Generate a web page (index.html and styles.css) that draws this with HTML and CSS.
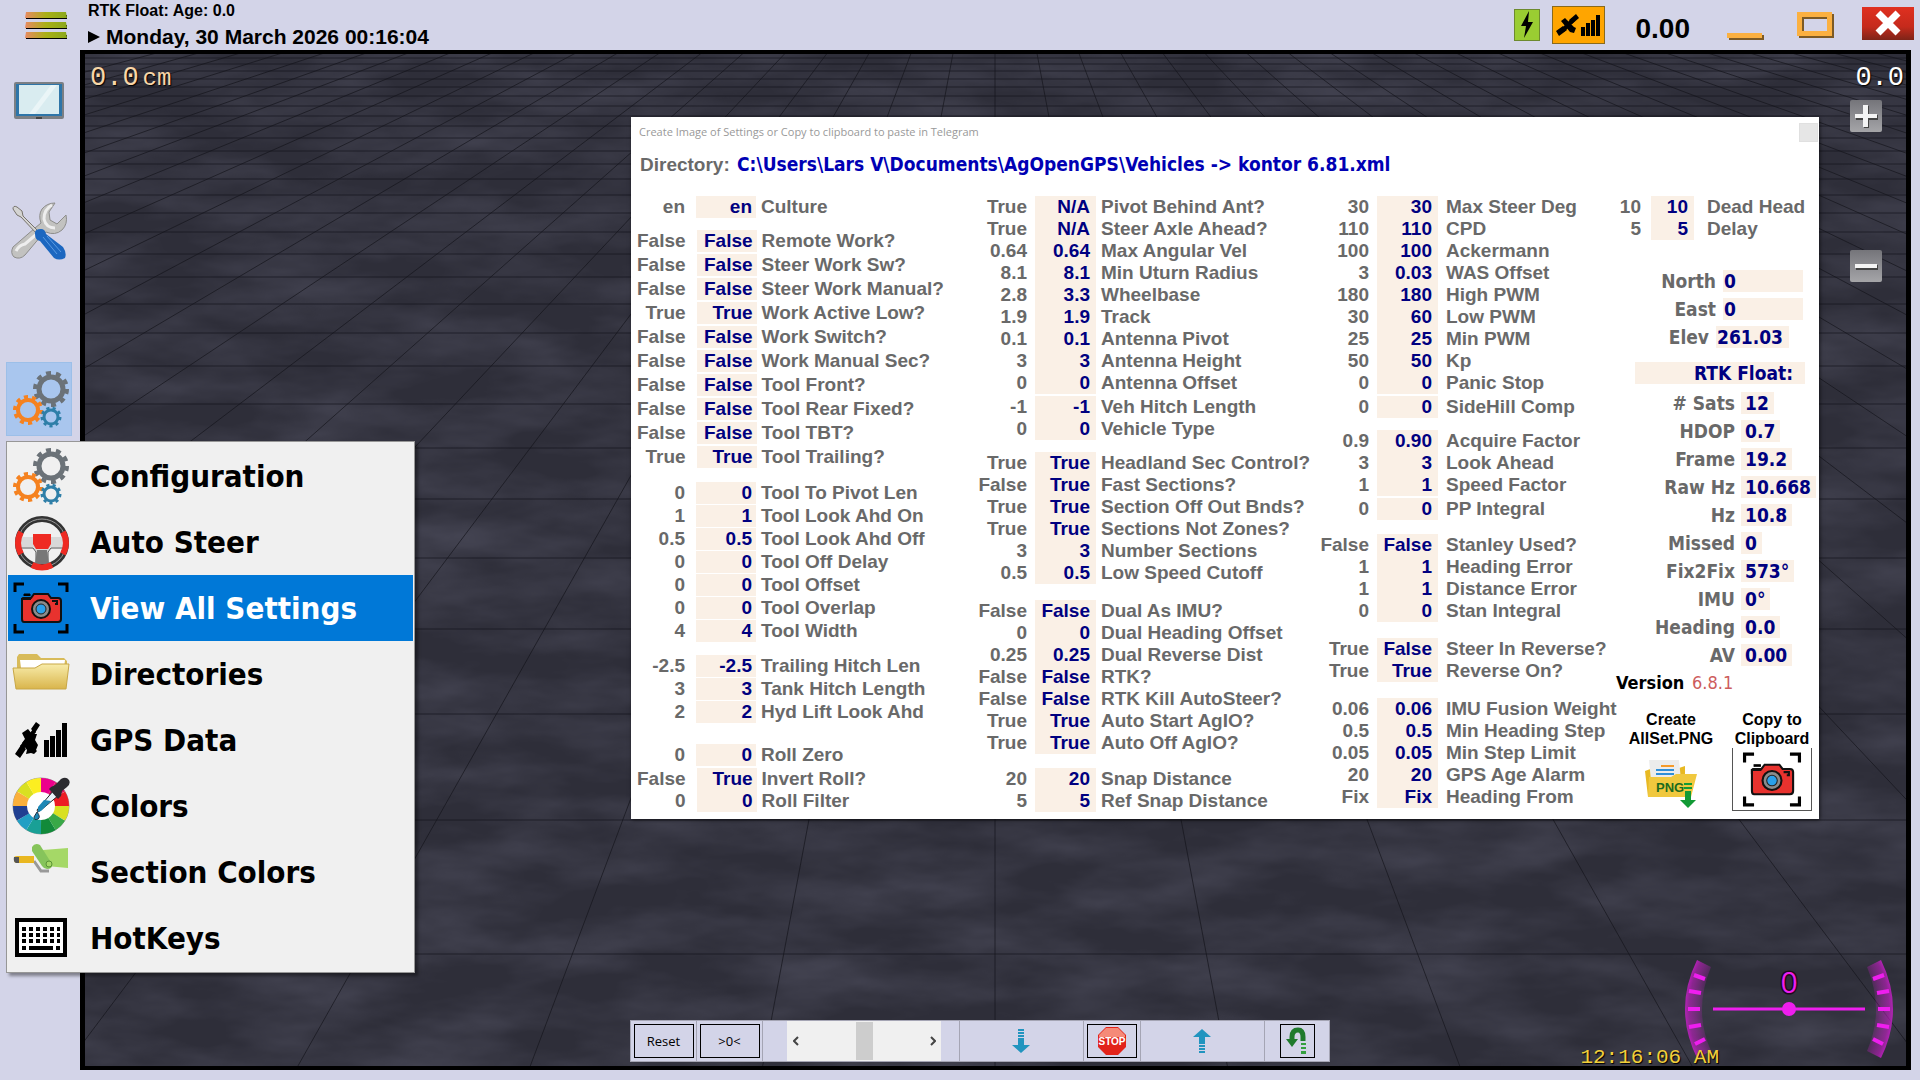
FILE: index.html
```html
<!DOCTYPE html>
<html lang="en">
<head>
    <meta charset="UTF-8">
    <meta name="viewport" content="width=device-width, initial-scale=1.0">
    <title>AgOpenGPS</title>
    <link rel="stylesheet" href="styles.css">
</head>
<body>
    <!-- Shared icons -->
    <svg class="sprite" aria-hidden="true">
        <symbol id="gears" viewBox="0 0 58 58">
            <g fill="none">
                <g stroke="#6b7278">
                    <circle cx="39" cy="19" r="12" stroke-width="5"/>
                    <circle cx="39" cy="19" r="16" stroke-width="4" pathLength="20" stroke-dasharray="1 1"/>
                </g>
                <g stroke="#f58220">
                    <circle cx="16" cy="40" r="10" stroke-width="4"/>
                    <circle cx="16" cy="40" r="13" stroke-width="4" pathLength="20" stroke-dasharray="1 1"/>
                </g>
                <g stroke="#2f7fa8">
                    <circle cx="39" cy="47" r="7" stroke-width="3"/>
                    <circle cx="39" cy="47" r="9" stroke-width="3" pathLength="18" stroke-dasharray="1 1"/>
                </g>
            </g>
        </symbol>
        <symbol id="camera" viewBox="0 0 58 54">
            <path d="M3 11V3h9M46 3h9v8M3 43v8h9M46 51h9v-8" fill="none" stroke="#000" stroke-width="3"/>
            <path d="M12 15v-2h6v2" fill="#000" stroke="#000" stroke-width="1"/>
            <path d="M11 17h8l3-4h14l3 4h7q3 0 3 3v18q0 3-3 3H12q-2 0-2-3V18z" fill="#e8322e" stroke="#111" stroke-width="2"/>
            <path d="M10 22v-4h9M40 20h5v3h-2" fill="none" stroke="#111" stroke-width="2"/>
            <circle cx="29" cy="28" r="9" fill="#8b8b8b" stroke="#111" stroke-width="2"/>
            <circle cx="29" cy="28" r="5" fill="#2aa0ea" stroke="#222" stroke-width="1"/>
        </symbol>
        <symbol id="gps" viewBox="0 0 54 38">
            <path d="M17 8l5-7 4 3-5 8zM1 33l6-9 5 4-6 9z"/>
            <path d="M8 12l6-4 4 5 5 0-2 6 3 5-2 5 1 1-3 3-3-1-5 1 1-4-3-4-2-3 3-4z"/>
            <path d="M6 25l13-17 3 3-12 17z"/>
            <path d="M30 19h5v17h-5zM36 15h5v21h-5zM42 9h5v27h-5zM48 2h5v34h-5z"/>
        </symbol>
    </svg>

    <header class="topbar">
        <button class="icon-button hamburger" aria-label="Menu">
            <svg width="44" height="28" viewBox="0 0 44 28">
                <defs>
                    <linearGradient id="bar">
                        <stop offset="0" stop-color="#e88a62"/>
                        <stop offset=".5" stop-color="#a9b016"/>
                        <stop offset="1" stop-color="#8aa81c"/>
                    </linearGradient>
                </defs>
                <path d="M2 3h41v4H2zM2 13h41v4H2zM2 23h41v4H2z" fill="#000"/>
                <path d="M2 0h40l1 6H1zM2 10h40l1 6H1zM2 20h40l1 6H1z" fill="url(#bar)"/>
            </svg>
        </button>
        <div class="status">
            <div class="fix">RTK Float: Age: 0.0</div>
            <div class="clock"><svg width="12" height="12" viewBox="0 0 12 12"><path d="M0 0l12 6-12 6z"/></svg>Monday, 30 March 2026 00:16:04</div>
        </div>
        <div class="indicators">
            <span class="power"><svg width="14" height="28" viewBox="0 0 14 28"><path d="M9 0L1 15h5L4 27l9-16H8z"/></svg></span>
            <button class="signal" aria-label="GPS signal"><svg width="45" height="22" viewBox="0 0 45 22"><path d="M13 6l7-6 3 4-7 6zM0 17l7-5 4 4-8 6z"/><path d="M5 7l4-3 9 9 2 1-2 5-4-1z"/><path d="M5 15l11-11 3 3-11 11z"/><path d="M25 13h4v9h-4zM30 9h4v13h-4zM35 6h4v16h-4zM40 1h4v21h-4z"/></svg></button>
            <span class="speed">0.00</span>
            <button class="icon-button minimize" aria-label="Minimize"><svg width="38" height="8" viewBox="0 0 38 8"><path d="M3 2h35v5H3z" fill="#7d5a24"/><path d="M1 0h35v5H1z" fill="#fbb040"/></svg></button>
            <button class="icon-button maximize" aria-label="Maximize"><svg width="38" height="28" viewBox="0 0 38 28"><path d="M3 3h35v24H3zm5 5v14h25V8z" fill="#7d5a24" fill-rule="evenodd"/><path d="M1 1h35v24H1zm5 5v14h25V6z" fill="#fbb040" fill-rule="evenodd"/></svg></button>
            <button class="close" aria-label="Close"><svg width="28" height="28" viewBox="0 0 28 28"><path d="M4 4l20 20M24 4L4 24" stroke="#fff" stroke-width="7"/></svg></button>
        </div>
    </header>

    <main class="workspace">
        <aside class="sidebar">
            <button class="icon-button side-button" aria-label="Display">
                <svg width="52" height="40" viewBox="0 0 52 40">
                    <rect x="1" y="1" width="50" height="37" rx="2" fill="#7b7f84"/>
                    <rect x="3" y="3" width="46" height="32" fill="#2e75a8"/>
                    <rect x="6" y="4" width="40" height="29" fill="#d9ecf0"/>
                    <path d="M16 33L38 4h6L22 33z" fill="#eaf5f7"/>
                    <path d="M23 36h6v2h-6z" fill="#444"/>
                </svg>
            </button>
            <button class="icon-button side-button" aria-label="Tools">
                <svg width="56" height="58" viewBox="0 0 56 58">
                    <path d="M2 45l22-19 6-5q-3-8 1-14 5-6 13-6l-6 9 1 8 7 4 9-9q2 9-4 15-7 6-16 2l-5 4L14 53q-5 5-11 2-4-4-1-10z" fill="#c2c2c0" stroke="#8d8d8b" stroke-width="1"/>
                    <path d="M5 49q3-6 9-7l14-12M41 3q-8 4-8 14 2 9 11 9" fill="none" stroke="#eee" stroke-width="3"/>
                    <path d="M2 7q0-4 4-2l5 4 1 5 16 16-2 2L10 15l-4-2z" fill="#d4d4d2" stroke="#77736c" stroke-width="1"/>
                    <path d="M24 32q-1-5 6-5 4 0 5 5l17 13q4 6 2 11-6 3-11 0L29 39q-5-1-5-7z" fill="#1c67c0"/>
                    <path d="M32 35l14 17M36 34l14 16" stroke="#5a9be2" stroke-width="1"/>
                </svg>
            </button>
            <button class="icon-button side-button active" aria-label="Settings"><svg width="58" height="58"><use href="#gears"/></svg></button>

            <ul class="menu">
                <li><button class="menu-item"><svg width="58" height="58"><use href="#gears"/></svg>Configuration</button></li>
                <li><button class="menu-item">
                    <svg width="58" height="58" viewBox="0 0 58 58">
                        <circle cx="30" cy="30" r="24" fill="none" stroke="#333" stroke-width="6"/>
                        <circle cx="30" cy="30" r="24" fill="none" stroke="#999" stroke-width="1"/>
                        <path d="M8 24h44v10H39l-3 4H24l-3-4H8z" fill="#d8d8d8"/>
                        <path d="M10 35h11l3 4v12M50 35H39l-3 4v12" fill="none" stroke="#555" stroke-width="1"/>
                        <path d="M25 37h10l2 14H23z" fill="#777"/>
                        <path d="M21 21h18v10l-3 5H24l-3-5z" fill="#ef2b23"/>
                        <path d="M9 19q-6 11 0 22M51 19q6 11 0 22M20 52q10 5 20 0" fill="none" stroke="#ef2b23" stroke-width="6"/>
                    </svg>Auto Steer</button></li>
                <li><button class="menu-item selected"><svg width="58" height="54"><use href="#camera"/></svg>View All Settings</button></li>
                <li><button class="menu-item">
                    <svg width="58" height="58" viewBox="0 0 58 58">
                        <defs>
                            <linearGradient id="folder" x2="0" y2="1">
                                <stop offset="0" stop-color="#f8ecaa"/>
                                <stop offset="1" stop-color="#d9b54c"/>
                            </linearGradient>
                        </defs>
                        <path d="M5 12l2-3h18l4 4h23l3 3v14H5z" fill="#d8bb5a"/>
                        <path d="M8 15h45l-1 8H9z" fill="#fff"/>
                        <path d="M1 23h22l7-4h27l-3 25H4z" fill="url(#folder)" stroke="#c8a747" stroke-width="1"/>
                    </svg>Directories</button></li>
                <li><button class="menu-item"><svg width="58" height="38"><use href="#gps"/></svg>GPS Data</button></li>
                <li><button class="menu-item">
                    <svg width="58" height="58" viewBox="0 0 58 58">
                        <circle cx="29" cy="29" r="28" fill="#fff" stroke="#999" stroke-width="1"/>
                        <g fill="none" stroke-width="14">
                            <path d="M29 8a21 21 0 0 1 11 3" stroke="#ec008c"/>
                            <path d="M40 11a21 21 0 0 1 7 7" stroke="#d4145a"/>
                            <path d="M47 18a21 21 0 0 1 3 11" stroke="#ed1c24"/>
                            <path d="M50 29a21 21 0 0 1-3 11" stroke="#d9e021"/>
                            <path d="M47 40a21 21 0 0 1-7 7" stroke="#39a847"/>
                            <path d="M40 47a21 21 0 0 1-11 3" stroke="#128a3a"/>
                            <path d="M29 50a21 21 0 0 1-11-3" stroke="#19a096"/>
                            <path d="M18 47a21 21 0 0 1-7-7" stroke="#219fc4"/>
                            <path d="M11 40a21 21 0 0 1-3-11" stroke="#203f91"/>
                            <path d="M8 29a21 21 0 0 1 3-11" stroke="#fbb03b"/>
                            <path d="M11 18a21 21 0 0 1 7-7" stroke="#d9e021"/>
                            <path d="M18 11a21 21 0 0 1 11-3" stroke="#fcee21"/>
                        </g>
                        <path d="M25 33l17-20 5 5-18 15-3 2z" fill="#e9f6fb" stroke="#222" stroke-width="1"/>
                        <path d="M26 30l6-7 7 1-10 10-3 1z" fill="#1d87b5"/>
                        <path d="M39 10l4-2 6-6q5-3 8 1 2 4-2 7l-5 4-1 5-3 3-9-10z" fill="#2b2b2f"/>
                        <path d="M25 35q4 5 1 7-4 2-4-2z" fill="#1d87b5" stroke="#234" stroke-width="1"/>
                    </svg>Colors</button></li>
                <li><button class="menu-item">
                    <svg width="58" height="58" viewBox="0 0 58 58">
                        <path d="M31 7l25-2v20l-22-2z" fill="#a5d867"/>
                        <path d="M22 18l7 10 8 0" fill="none" stroke="#999" stroke-width="3"/>
                        <path d="M20 4q3-5 8-2l12 19q1 5-5 5-3 0-5-3L20 8z" fill="#86c45b"/>
                        <circle cx="37" cy="21" r="3" fill="#a5d867" stroke="#5a9336" stroke-width="1"/>
                        <path d="M2 15q0-2 3-2l17 0v7L5 20q-3 0-3-3z" fill="#e9b720"/>
                        <path d="M2 14h5v6H4q-3-1-2-6z" fill="#555"/>
                    </svg>Section Colors</button></li>
                <li><button class="menu-item">
                    <svg width="58" height="42" viewBox="0 0 58 42">
                        <rect x="5" y="3" width="48" height="35" fill="#fff" stroke="#000" stroke-width="4"/>
                        <path d="M10 12h38M10 18h38M10 24h38" stroke="#000" stroke-width="4" stroke-dasharray="4 3"/>
                        <path d="M10 31h4M17 31h24M44 31h4" stroke="#000" stroke-width="4"/>
                    </svg>HotKeys</button></li>
            </ul>
        </aside>

        <section class="field">
            <svg class="floor" viewBox="85 54 1821 1012" preserveAspectRatio="none" aria-hidden="true">
                <defs>
                    <filter id="soil" x="0" y="0" width="100%" height="100%" color-interpolation-filters="sRGB">
                        <feTurbulence type="fractalNoise" baseFrequency=".008 .025" numOctaves="4" seed="7"/>
                        <feColorMatrix values="0 0 0 0 .3  0 0 0 0 .3  0 0 0 0 .36  1.2 0 0 0 -.4"/>
                    </filter>
                </defs>
                <rect x="85" y="54" width="1821" height="1012" fill="#2e2e39"/>
                <rect x="85" y="54" width="1821" height="1012" filter="url(#soil)"/>
                <path class="grid-line" d="M85 954H1906M85 820H1906M85 714H1906M85 629H1906M85 558H1906M85 499H1906M85 448H1906M85 404H1906M85 366H1906M85 333H1906M85 304H1906M85 277H1906M85 254H1906M85 232H1906M85 213H1906M85 195H1906M85 179H1906M85 164H1906M85 151H1906M85 138H1906M85 126H1906M85 116H1906M85 106H1906M85 96H1906M85 87H1906M85 79H1906M85 71H1906M85 64H1906M85 58H1906"/>
                <path class="grid-line" d="M995 1080V-170L1230 1080H1465L995-170 1700 1080H1935L995-170 2170 1080H2405L995-170 2640 1080H2875L995-170 3110 1080H3345L995-170 3580 1080H3815L995-170 4050 1080H4285L995-170 4520 1080H4755L995-170 4990 1080H5225L995-170 5460 1080H5695L995-170 5930 1080"/>
                <path class="grid-line" d="M760 1080L995-170 525 1080H290L995-170 55 1080H-180L995-170-415 1080H-650L995-170-885 1080H-1120L995-170-1355 1080H-1590L995-170-1825 1080H-2060L995-170-2295 1080H-2530L995-170-2765 1080H-3000L995-170-3235 1080H-3470L995-170-3705 1080H-3940"/>
            </svg>

            <div class="hud offset">0.0<small>cm</small></div>
            <div class="hud heading">0.0</div>
            <div class="zoom">
                <button aria-label="Zoom in"><svg width="24" height="24" viewBox="0 0 24 24"><path d="M10 2h5v9h9v5h-9v8h-5v-8H2v-5h8z" fill="#444"/><path d="M9 1h5v9h9v4h-9v9H9v-9H1v-4h8z" fill="#f4f4f4"/></svg></button>
                <button aria-label="Zoom out"><svg width="24" height="24" viewBox="0 0 24 24"><path d="M2 11h22v5H2z" fill="#444"/><path d="M1 10h22v4H1z" fill="#f4f4f4"/></svg></button>
            </div>

            <!-- Roll gauge -->
            <svg class="gauge" width="216" height="104" viewBox="0 0 216 104">
                <defs>
                    <radialGradient id="arc" gradientUnits="userSpaceOnUse" cx="108" cy="52" r="104">
                        <stop offset=".82" stop-color="#e81ee8" stop-opacity=".1"/>
                        <stop offset=".96" stop-color="#c81ec8" stop-opacity=".6"/>
                        <stop offset="1" stop-color="#d01ed0" stop-opacity=".8"/>
                    </radialGradient>
                </defs>
                <path d="M16 3q-24 49 0 98l14-7q-18-41 0-84zM200 3q24 49 0 98l-14-7q18-41 0-84z" fill="url(#arc)"/>
                <path d="M13 18l11 4M8 34l12 2M7 52h12M8 70l12-2M14 87l10-5M203 18l-11 4M208 34l-12 2M209 52h-12M208 70l-12-2M202 87l-10-5" stroke="#ee1eee" stroke-width="4"/>
                <path d="M32 52h152" stroke="#ee1eee" stroke-width="3"/>
                <circle cx="108" cy="52" r="7" fill="#ee1eee"/>
                <text x="108" y="36" text-anchor="middle">0</text>
            </svg>
            <time class="hud local-time">12:16:06 AM</time>

            <div class="simulator">
                <div class="cell reset"><button class="boxed">Reset</button></div>
                <div class="cell zero"><button class="boxed">&gt;0&lt;</button></div>
                <div class="cell slider">
                    <div class="scrollbar">
                        <button aria-label="Steer left"><svg width="6" height="10" viewBox="0 0 6 10"><path d="M5 1L1 5l4 4" fill="none" stroke="#444" stroke-width="2"/></svg></button>
                        <input type="range" aria-label="Steer angle" min="-100" max="100" value="0">
                        <button aria-label="Steer right"><svg width="6" height="10" viewBox="0 0 6 10"><path d="M1 1l4 4-4 4" fill="none" stroke="#444" stroke-width="2"/></svg></button>
                    </div>
                </div>
                <div class="cell wide"><button class="icon-button" aria-label="Slower"><svg width="18" height="24" viewBox="0 0 18 24"><path d="M6 0h6v2H6zM6 3h6v2H6zM6 6h6v2H6zM6 9h6v7h6l-9 8-9-8h6z" fill="#2194bf"/></svg></button></div>
                <div class="cell stop"><button class="boxed" aria-label="Stop"><svg width="30" height="28" viewBox="0 0 30 28"><path d="M9 0h12l8 8v12l-8 8H9l-8-8V8z" fill="#e2231a"/><path d="M9 1h12l7 7v2H2V8z" fill="#f58a78"/><text x="15" y="18" text-anchor="middle">STOP</text></svg></button></div>
                <div class="cell wide"><button class="icon-button" aria-label="Faster"><svg width="18" height="24" viewBox="0 0 18 24"><path d="M6 22h6v2H6zM6 19h6v2H6zM6 16h6v2H6zM6 15V8H0l9-8 9 8h-6v7z" fill="#2194bf"/></svg></button></div>
                <div class="cell turn"><button class="boxed" aria-label="Reverse direction"><svg width="22" height="28" viewBox="0 0 22 28"><path d="M6 15V10q0-7 6-7 5 0 5 7v4" fill="none" stroke="#1f7a2c" stroke-width="5"/><path d="M0 12h12l-6 8z" fill="#1f7a2c"/><path d="M15 16h5v2h-5zM15 20h5v2h-5zM15 24h5v3h-5z" fill="#35a03f"/></svg></button></div>
            </div>

            <section class="dialog">
                <div class="title-row">
                    <h1>Create Image of Settings or Copy to clipboard to paste in Telegram</h1>
                    <button class="dialog-close" aria-label="Close dialog"></button>
                </div>
                <p class="directory">Directory: <span>C:\Users\Lars V\Documents\AgOpenGPS\Vehicles -&gt; kontor 6.81.xml</span></p>

                <div class="columns">
                    <div class="column tool">
                        <table>
                            <tr><td>en</td><td>en</td><td>Culture</td></tr>
                        </table>
                        <table class="loose gap-12">
                            <tr><td>False</td><td>False</td><td>Remote Work?</td></tr>
                            <tr><td>False</td><td>False</td><td>Steer Work Sw?</td></tr>
                            <tr><td>False</td><td>False</td><td>Steer Work Manual?</td></tr>
                            <tr><td>True</td><td>True</td><td>Work Active Low?</td></tr>
                            <tr><td>False</td><td>False</td><td>Work Switch?</td></tr>
                            <tr><td>False</td><td>False</td><td>Work Manual Sec?</td></tr>
                            <tr><td>False</td><td>False</td><td>Tool Front?</td></tr>
                            <tr><td>False</td><td>False</td><td>Tool Rear Fixed?</td></tr>
                            <tr><td>False</td><td>False</td><td>Tool TBT?</td></tr>
                            <tr><td>True</td><td>True</td><td>Tool Trailing?</td></tr>
                        </table>
                        <table class="snug gap-12">
                            <tr><td>0</td><td>0</td><td>Tool To Pivot Len</td></tr>
                            <tr><td>1</td><td>1</td><td>Tool Look Ahd On</td></tr>
                            <tr><td>0.5</td><td>0.5</td><td>Tool Look Ahd Off</td></tr>
                            <tr><td>0</td><td>0</td><td>Tool Off Delay</td></tr>
                            <tr><td>0</td><td>0</td><td>Tool Offset</td></tr>
                            <tr><td>0</td><td>0</td><td>Tool Overlap</td></tr>
                            <tr><td>4</td><td>4</td><td>Tool Width</td></tr>
                        </table>
                        <table class="snug gap-12">
                            <tr><td>-2.5</td><td>-2.5</td><td>Trailing Hitch Len</td></tr>
                            <tr><td>3</td><td>3</td><td>Tank Hitch Length</td></tr>
                            <tr><td>2</td><td>2</td><td>Hyd Lift Look Ahd</td></tr>
                        </table>
                        <table class="gap-20">
                            <tr><td>0</td><td>0</td><td>Roll Zero</td></tr>
                        </table>
                        <table class="gap-2">
                            <tr><td>False</td><td>True</td><td>Invert Roll?</td></tr>
                            <tr><td>0</td><td>0</td><td>Roll Filter</td></tr>
                        </table>
                    </div>

                    <div class="column vehicle">
                        <table>
                            <tr><td>True</td><td>N/A</td><td>Pivot Behind Ant?</td></tr>
                            <tr><td>True</td><td>N/A</td><td>Steer Axle Ahead?</td></tr>
                            <tr><td>0.64</td><td>0.64</td><td>Max Angular Vel</td></tr>
                            <tr><td>8.1</td><td>8.1</td><td>Min Uturn Radius</td></tr>
                            <tr><td>2.8</td><td>3.3</td><td>Wheelbase</td></tr>
                            <tr><td>1.9</td><td>1.9</td><td>Track</td></tr>
                            <tr><td>0.1</td><td>0.1</td><td>Antenna Pivot</td></tr>
                            <tr><td>3</td><td>3</td><td>Antenna Height</td></tr>
                            <tr><td>0</td><td>0</td><td>Antenna Offset</td></tr>
                        </table>
                        <table class="gap-2">
                            <tr><td>-1</td><td>-1</td><td>Veh Hitch Length</td></tr>
                            <tr><td>0</td><td>0</td><td>Vehicle Type</td></tr>
                        </table>
                        <table class="gap-12">
                            <tr><td>True</td><td>True</td><td>Headland Sec Control?</td></tr>
                            <tr><td>False</td><td>True</td><td>Fast Sections?</td></tr>
                            <tr><td>True</td><td>True</td><td>Section Off Out Bnds?</td></tr>
                            <tr><td>True</td><td>True</td><td>Sections Not Zones?</td></tr>
                            <tr><td>3</td><td>3</td><td>Number Sections</td></tr>
                            <tr><td>0.5</td><td>0.5</td><td>Low Speed Cutoff</td></tr>
                        </table>
                        <table class="gap-16">
                            <tr><td>False</td><td>False</td><td>Dual As IMU?</td></tr>
                            <tr><td>0</td><td>0</td><td>Dual Heading Offset</td></tr>
                            <tr><td>0.25</td><td>0.25</td><td>Dual Reverse Dist</td></tr>
                            <tr><td>False</td><td>False</td><td>RTK?</td></tr>
                            <tr><td>False</td><td>False</td><td>RTK Kill AutoSteer?</td></tr>
                            <tr><td>True</td><td>True</td><td>Auto Start AgIO?</td></tr>
                            <tr><td>True</td><td>True</td><td>Auto Off AgIO?</td></tr>
                        </table>
                        <table class="gap-14">
                            <tr><td>20</td><td>20</td><td>Snap Distance</td></tr>
                            <tr><td>5</td><td>5</td><td>Ref Snap Distance</td></tr>
                        </table>
                    </div>

                    <div class="column steer">
                        <table>
                            <tr><td>30</td><td>30</td><td>Max Steer Deg</td></tr>
                            <tr><td>110</td><td>110</td><td>CPD</td></tr>
                            <tr><td>100</td><td>100</td><td>Ackermann</td></tr>
                            <tr><td>3</td><td>0.03</td><td>WAS Offset</td></tr>
                            <tr><td>180</td><td>180</td><td>High PWM</td></tr>
                            <tr><td>30</td><td>60</td><td>Low PWM</td></tr>
                            <tr><td>25</td><td>25</td><td>Min PWM</td></tr>
                            <tr><td>50</td><td>50</td><td>Kp</td></tr>
                            <tr><td>0</td><td>0</td><td>Panic Stop</td></tr>
                        </table>
                        <table class="gap-2">
                            <tr><td>0</td><td>0</td><td>SideHill Comp</td></tr>
                        </table>
                        <table class="gap-12">
                            <tr><td>0.9</td><td>0.90</td><td>Acquire Factor</td></tr>
                            <tr><td>3</td><td>3</td><td>Look Ahead</td></tr>
                            <tr><td>1</td><td>1</td><td>Speed Factor</td></tr>
                        </table>
                        <table class="gap-2">
                            <tr><td>0</td><td>0</td><td>PP Integral</td></tr>
                        </table>
                        <table class="gap-14">
                            <tr><td>False</td><td>False</td><td>Stanley Used?</td></tr>
                            <tr><td>1</td><td>1</td><td>Heading Error</td></tr>
                            <tr><td>1</td><td>1</td><td>Distance Error</td></tr>
                            <tr><td>0</td><td>0</td><td>Stan Integral</td></tr>
                        </table>
                        <table class="gap-16">
                            <tr><td>True</td><td>False</td><td>Steer In Reverse?</td></tr>
                            <tr><td>True</td><td>True</td><td>Reverse On?</td></tr>
                        </table>
                        <table class="gap-16">
                            <tr><td>0.06</td><td>0.06</td><td>IMU Fusion Weight</td></tr>
                            <tr><td>0.5</td><td>0.5</td><td>Min Heading Step</td></tr>
                            <tr><td>0.05</td><td>0.05</td><td>Min Step Limit</td></tr>
                            <tr><td>20</td><td>20</td><td>GPS Age Alarm</td></tr>
                            <tr><td>Fix</td><td>Fix</td><td>Heading From</td></tr>
                        </table>
                    </div>

                    <div class="column live">
                        <table>
                            <tr><td>10</td><td>10</td><td>Dead Head</td></tr>
                            <tr><td>5</td><td>5</td><td>Delay</td></tr>
                        </table>
                        <dl class="position">
                            <div><dt>North</dt><dd>0</dd></div>
                            <div><dt>East</dt><dd>0</dd></div>
                            <div class="elevation"><dt>Elev</dt><dd>261.03</dd></div>
                        </dl>
                        <div class="fix-type">RTK Float:</div>
                        <dl class="readings">
                            <div><dt># Sats</dt><dd>12</dd></div>
                            <div><dt>HDOP</dt><dd>0.7</dd></div>
                            <div><dt>Frame</dt><dd>19.2</dd></div>
                            <div><dt>Raw Hz</dt><dd>10.668</dd></div>
                            <div><dt>Hz</dt><dd>10.8</dd></div>
                            <div><dt>Missed</dt><dd>0</dd></div>
                            <div><dt>Fix2Fix</dt><dd>573°</dd></div>
                            <div><dt>IMU</dt><dd>0°</dd></div>
                            <div><dt>Heading</dt><dd>0.0</dd></div>
                            <div><dt>AV</dt><dd>0.00</dd></div>
                        </dl>
                        <div class="version">Version <span>6.8.1</span></div>
                        <div class="exports">
                            <div>
                                <label for="create-png">Create<br>AllSet.PNG</label>
                                <button id="create-png" class="icon-button png">
                                    <svg width="54" height="50" viewBox="0 0 54 50">
                                        <path d="M1 12l8-3h26l6-2v28L4 38z" fill="#e8b923"/>
                                        <path d="M5 1l30 0 3 30-30 2z" fill="#ececec"/>
                                        <path d="M17 7h13" stroke="#f59a2a" stroke-width="2"/>
                                        <path d="M12 11h18M12 15h18" stroke="#2f8fd8" stroke-width="2"/>
                                        <path d="M5 18l22 0 5-3h21l-6 23H4z" fill="#f0c83e"/>
                                        <text x="12" y="33">PNG</text>
                                        <path d="M40 24h8v2h-8zM40 28h8v2h-8zM41 32h6v9h5l-8 8-8-8h5z" fill="#129a35"/>
                                    </svg>
                                </button>
                            </div>
                            <div>
                                <label for="copy-clipboard">Copy to<br>Clipboard</label>
                                <button id="copy-clipboard" class="copy"><svg width="62" height="57"><use href="#camera"/></svg></button>
                            </div>
                        </div>
                    </div>
                </div>
            </section>
        </section>
    </main>
</body>
</html>
```

FILE: styles.css
```css
/* Reset and base styles */
* {
    margin: 0;
    padding: 0;
    box-sizing: border-box;
}
body {
    display: flex;
    flex-direction: column;
    min-height: 100vh;
    padding-bottom: 10px;
    background-color: #d3d4e8;
    color: #000;
    font-family: "Liberation Sans", Arial, sans-serif;
    font-weight: bold;
    overflow: hidden;
}
button {
    border: none;
    background: none;
    font: inherit;
    color: inherit;
    cursor: pointer;
}
svg {
    display: block;
}
ul {
    list-style: none;
}
.sprite {
    position: absolute;
    width: 0;
    height: 0;
}
.icon-button {
    display: flex;
    align-items: center;
    justify-content: center;
}

/* Top bar */
.topbar {
    display: flex;
    height: 50px;
    padding-right: 6px;
}
.hamburger {
    width: 88px;
    padding: 2px 0 0 4px;
}
.status {
    padding-top: 1px;
}
.fix {
    font-size: 16px;
    line-height: 20px;
}
.clock {
    display: flex;
    align-items: center;
    gap: 6px;
    font-size: 21px;
    line-height: 32px;
}
.indicators {
    display: flex;
    align-items: center;
    margin-left: auto;
    height: 50px;
}
.power {
    padding: 1px 5px;
    border: 1px solid #6d8a2e;
    background-color: #9acd32;
}
.signal {
    margin-left: 12px;
    padding: 7px 3px;
    border: 1px solid #8a6a1c;
    background-color: #ffa500;
}
.speed {
    margin: 8px 36px 0 31px;
    font-size: 28px;
    line-height: 32px;
}
.minimize {
    margin-top: 24px;
}
.maximize {
    margin-left: 32px;
}
.close {
    display: flex;
    align-items: center;
    justify-content: center;
    width: 52px;
    height: 33px;
    margin: 0 0 4px 28px;
    background: linear-gradient(#e03020, #c52a1c 60%, #7d2418);
}

/* Workspace */
.workspace {
    flex: 1;
    display: flex;
    padding-right: 9px;
}
.sidebar {
    position: relative;
    z-index: 2;
    display: flex;
    flex-direction: column;
    gap: 56px;
    width: 80px;
    padding: 14px 8px 0 6px;
}
.side-button {
    width: 66px;
    height: 74px;
}
.side-button.active {
    margin-top: 38px;
    padding-left: 4px;
    border: 1px solid #9cbfe8;
    background-color: #a9c6ee;
}

/* Settings menu */
.menu {
    position: absolute;
    top: 391px;
    left: 6px;
    width: 409px;
    padding: 1px;
    border: 1px solid #979797;
    background-color: #f0f0f0;
    box-shadow: 3px 3px 3px rgba(0, 0, 0, 0.4);
}
.menu-item {
    display: flex;
    align-items: center;
    gap: 20px;
    width: 100%;
    height: 66px;
    padding-left: 4px;
    font-family: "DejaVu Sans Condensed", "Noto Sans", sans-serif;
    font-size: 31px;
    font-weight: bold;
    text-align: left;
}
.menu-item.selected {
    background-color: #0078d7;
    color: #fff;
}

/* Field view */
.field {
    position: relative;
    flex: 1;
    border: solid #000;
    border-width: 4px 5px;
}
.floor {
    position: absolute;
    width: 100%;
    height: 100%;
}
.grid-line {
    fill: none;
    stroke: #16161c;
    stroke-opacity: 0.7;
}
.hud {
    position: absolute;
    font-family: "Liberation Mono", monospace;
    font-size: 27px;
    font-weight: normal;
    line-height: 30px;
    text-shadow: 1px 1px 1px #000;
}
.hud small {
    margin-left: 4px;
    font-size: 24px;
}
.offset {
    top: 9px;
    left: 5px;
    color: #f8d6a8;
}
.heading {
    top: 9px;
    right: 2px;
    color: #fff;
}
.local-time {
    right: 187px;
    bottom: -7px;
    font-size: 21px;
    color: #f2cf3a;
}
.zoom {
    position: absolute;
    top: 46px;
    right: 24px;
    display: flex;
    flex-direction: column;
    gap: 118px;
}
.zoom button {
    width: 32px;
    height: 32px;
    padding: 4px;
    border-radius: 2px;
    background: linear-gradient(#75757a, #a5a5a8);
}
.gauge {
    position: absolute;
    right: 9px;
    bottom: 5px;
}
.gauge text {
    fill: #ee1eee;
    stroke: #200820;
    stroke-width: 3px;
    paint-order: stroke;
    font-family: "Open Sans", sans-serif;
    font-size: 30px;
    font-weight: normal;
}

/* Simulator bar */
.simulator {
    position: absolute;
    bottom: 4px;
    left: 545px;
    display: flex;
    height: 42px;
    border: 1px solid #a5a5b4;
    background-color: #d3d4e8;
}
.cell {
    display: flex;
    align-items: center;
    justify-content: center;
    border-right: 1px solid #a5a5b4;
}
.cell:last-child {
    border-right: none;
}
.boxed {
    display: flex;
    align-items: center;
    justify-content: center;
    height: 34px;
    border: 1px solid #000;
    font-family: "Open Sans", sans-serif;
    font-size: 13px;
    font-weight: normal;
}
.reset,
.zero {
    width: 66px;
}
.reset .boxed,
.zero .boxed {
    width: 60px;
}
.slider {
    width: 197px;
    padding-left: 6px;
}
.wide {
    width: 124px;
    padding-right: 2px;
}
.stop {
    width: 57px;
}
.stop .boxed {
    width: 50px;
}
.stop text {
    fill: #fff;
    font-family: "Liberation Sans", sans-serif;
    font-size: 10px;
    font-weight: bold;
}
.turn {
    width: 64px;
}
.turn .boxed {
    width: 35px;
}
.scrollbar {
    display: flex;
    width: 154px;
    height: 40px;
    background-color: #f0f0f0;
}
.scrollbar button {
    display: flex;
    align-items: center;
    justify-content: center;
    width: 17px;
}
.scrollbar input {
    appearance: none;
    width: 120px;
    background: none;
}
.scrollbar input::-webkit-slider-thumb {
    appearance: none;
    width: 17px;
    height: 38px;
    background-color: #cdcdcd;
}

/* Settings dialog */
.dialog {
    position: absolute;
    top: 63px;
    left: 546px;
    width: 1188px;
    padding-bottom: 7px;
    background-color: #fff;
    color: #696969;
    font-size: 19px;
    line-height: 22px;
    box-shadow: 1px 1px 4px rgba(0, 0, 0, 0.6);
}
.title-row {
    display: flex;
    justify-content: space-between;
    padding: 6px 1px 0 8px;
}
.title-row h1 {
    font-family: "Open Sans", sans-serif;
    font-size: 11px;
    font-weight: normal;
    line-height: 18px;
    color: #999;
}
.dialog-close {
    width: 19px;
    height: 19px;
    border: 1px solid #e0e0e0;
    background-color: #e6e6e6;
}
.directory {
    padding: 11px 9px 0;
}
.directory span {
    margin-left: 2px;
    font-family: "DejaVu Sans Condensed", "Noto Sans", sans-serif;
    color: #0000b4;
}
.columns {
    display: grid;
    grid-template-columns: 341px 342px 296px 1fr;
    padding: 20px 1px 0 6px;
}
.column {
    white-space: nowrap;
}
.column table {
    border-collapse: separate;
    border-spacing: 0;
}
.column td {
    height: 22px;
    line-height: 22px;
}
.column td:nth-child(1) {
    min-width: 57px;
    padding-right: 8px;
    text-align: right;
}
.column td:nth-child(2) {
    min-width: 61px;
    padding-right: 6px;
    background-color: #faf0e6;
    background-clip: padding-box;
    color: #000080;
    text-align: right;
}
.column td:nth-child(3) {
    padding-left: 5px;
}
.column.tool td:nth-child(1) {
    min-width: 59px;
    padding-right: 11px;
}
.column.tool td:nth-child(2) {
    min-width: 60px;
    padding-right: 4px;
}
.column.steer td:nth-child(3) {
    padding-left: 8px;
}
.column.live td:nth-child(1) {
    min-width: 35px;
    padding-right: 10px;
}
.column.live td:nth-child(2) {
    min-width: 43px;
}
.column.live td:nth-child(3) {
    padding-left: 13px;
}
.column .loose td {
    border-bottom: 2px solid #fff;
}
.column .snug td {
    border-bottom: 1px solid #fff;
}
.gap-2 {
    margin-top: 2px;
}
.gap-12 {
    margin-top: 12px;
}
.gap-14 {
    margin-top: 14px;
}
.gap-16 {
    margin-top: 16px;
}
.gap-20 {
    margin-top: 20px;
}

/* Live GPS readings */
.position,
.readings,
.fix-type,
.version {
    font-family: "DejaVu Sans Condensed", "Noto Sans", sans-serif;
}
.position {
    display: flex;
    flex-direction: column;
    gap: 6px;
    margin-top: 30px;
}
.position div,
.readings div {
    display: flex;
}
.position dt {
    width: 107px;
    padding-right: 7px;
    text-align: right;
}
.position dd {
    width: 80px;
    padding-left: 1px;
}
.position .elevation dt {
    width: 100px;
}
.position .elevation dd {
    width: 73px;
}
.live dd,
.fix-type {
    background-color: #faf0e6;
    color: #000080;
}
.fix-type {
    width: 170px;
    margin: 14px 0 8px 19px;
    padding-right: 12px;
    text-align: right;
}
.readings {
    display: flex;
    flex-direction: column;
    gap: 6px;
}
.readings dt {
    width: 125px;
    padding-right: 6px;
    text-align: right;
}
.readings dd {
    padding: 0 5px 0 4px;
}
.version {
    margin-top: 6px;
    font-size: 18px;
    color: #000;
}
.version span {
    margin-left: 2px;
    font-weight: normal;
    color: #cd5c5c;
}
.exports {
    display: flex;
    gap: 18px;
    margin-top: 16px;
    padding-left: 12px;
    font-size: 16px;
    line-height: 19px;
    color: #000;
    text-align: center;
}
.exports label {
    display: block;
}
.png {
    width: 86px;
    height: 63px;
    padding-top: 8px;
}
.png text {
    fill: #1d6b1d;
    font-size: 13px;
    font-weight: bold;
}
.copy {
    display: flex;
    align-items: center;
    justify-content: center;
    width: 80px;
    height: 63px;
    border: 1px solid #555;
    border-top: none;
}
```
